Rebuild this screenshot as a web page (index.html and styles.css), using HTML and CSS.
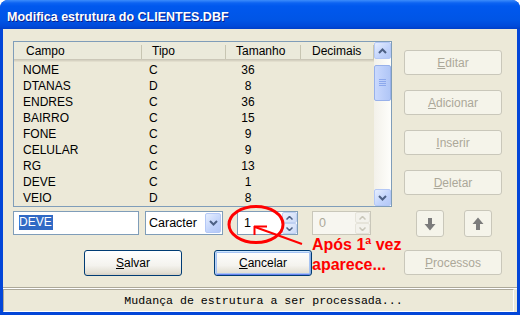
FILE: index.html
```html
<!DOCTYPE html>
<html lang="pt">
<head>
  <meta charset="UTF-8" />
  <title>Modifica estrutura do CLIENTES.DBF</title>
  <link rel="stylesheet" href="styles.css">
</head>
<body>

  <div class="window">
    <div class="titlebar">Modifica estrutura do CLIENTES.DBF</div>

    <div class="client">
      <div class="main">
        <div class="left">
          <div class="grid">
            <div class="cols">
              <div class="head">
                <div class="c-campo">Campo</div>
                <div class="c-tipo">Tipo</div>
                <div class="c-tam">Tamanho</div>
                <div class="c-dec">Decimais</div>
              </div>
              <div id="rows"></div>
            </div>
            <div class="vscroll">
              <div class="sbtn">
                <svg width="9" height="6" viewBox="0 0 9 6"><polyline points="1,5 4.5,1.5 8,5" fill="none" stroke="#4D6185" stroke-width="2"/></svg>
              </div>
              <div class="track">
                <div class="thumb">
                  <svg width="7" height="8" viewBox="0 0 7 8"><path d="M0 0.5h7M0 2.5h7M0 4.5h7M0 6.5h7" stroke="#8CA8EC" stroke-width="1"/></svg>
                </div>
              </div>
              <div class="sbtn">
                <svg width="9" height="6" viewBox="0 0 9 6"><polyline points="1,1 4.5,4.5 8,1" fill="none" stroke="#4D6185" stroke-width="2"/></svg>
              </div>
            </div>
          </div>

          <div class="editrow">
            <div class="textbox"><span class="sel">DEVE</span></div>
            <div class="combo">
              <span class="combo-text">Caracter</span>
              <div class="dropbtn">
                <svg width="9" height="6" viewBox="0 0 9 6"><polyline points="1,1 4.5,4.5 8,1" fill="none" stroke="#4D6185" stroke-width="2"/></svg>
              </div>
            </div>
            <div class="spin">
              <span class="spin-text">1</span>
              <div class="spin-btns">
                <div class="sp"><svg width="7" height="4" viewBox="0 0 7 4"><polyline points="0.5,3.5 3.5,0.5 6.5,3.5" fill="none" stroke="#4D6185" stroke-width="1.5"/></svg></div>
                <div class="sp"><svg width="7" height="4" viewBox="0 0 7 4"><polyline points="0.5,0.5 3.5,3.5 6.5,0.5" fill="none" stroke="#4D6185" stroke-width="1.5"/></svg></div>
              </div>
            </div>
            <div class="spin spin2 disabled">
              <span class="spin-text">0</span>
              <div class="spin-btns">
                <div class="sp"><svg width="7" height="4" viewBox="0 0 7 4"><polyline points="0.5,3.5 3.5,0.5 6.5,3.5" fill="none" stroke="#C9C7BA" stroke-width="1.5"/></svg></div>
                <div class="sp"><svg width="7" height="4" viewBox="0 0 7 4"><polyline points="0.5,0.5 3.5,3.5 6.5,0.5" fill="none" stroke="#C9C7BA" stroke-width="1.5"/></svg></div>
              </div>
            </div>
          </div>

          <div class="actions">
            <button class="btn"><u>S</u>alvar</button>
            <button class="btn default"><u>C</u>ancelar</button>
          </div>
        </div>

        <div class="side">
          <button class="btn off"><u>E</u>ditar</button>
          <button class="btn off"><u>A</u>dicionar</button>
          <button class="btn off"><u>I</u>nserir</button>
          <button class="btn off"><u>D</u>eletar</button>
          <div class="arrows">
            <button class="btn off arrow">
              <svg width="12" height="14" viewBox="0 0 12 14"><path d="M4 1h4v6h3.5l-5.5 6.5-5.5-6.5h3.5z" fill="#7C7C7C"/></svg>
            </button>
            <button class="btn off arrow">
              <svg width="12" height="14" viewBox="0 0 12 14"><path d="M4 13h4v-6h3.5l-5.5-6.5-5.5 6.5h3.5z" fill="#7C7C7C"/></svg>
            </button>
          </div>
          <button class="btn off proc"><u>P</u>rocessos</button>
        </div>
      </div>

      <div class="sep"></div>
      <div class="status">Mudança de estrutura a ser processada...</div>
    </div>

    <!-- anotação em vermelho sobre o print -->
    <svg class="marks" width="520" height="315" viewBox="0 0 520 315">
      <ellipse cx="256" cy="224.5" rx="27" ry="18" fill="none" stroke="#FF0000" stroke-width="3"/>
      <path d="M255 227 L302 244" stroke="#FF0000" stroke-width="2"/>
      <path d="M254 226.5 H267 M254.5 226 V235" stroke="#FF0000" stroke-width="2"/>
    </svg>
    <div class="note">Após 1ª vez<br>aparece...</div>
  </div>

  <script>
    const campos = [
      ["NOME", "C", 36], ["DTANAS", "D", 8], ["ENDRES", "C", 36],
      ["BAIRRO", "C", 15], ["FONE", "C", 9], ["CELULAR", "C", 9],
      ["RG", "C", 13], ["DEVE", "C", 1], ["VEIO", "D", 8]
    ];
    const rows = document.getElementById("rows");
    campos.forEach(c => {
      const div = document.createElement("div");
      div.className = "row";
      div.innerHTML = `
        <div class="c-campo">${c[0]}</div>
        <div class="c-tipo">${c[1]}</div>
        <div class="c-tam">${c[2]}</div>
        <div class="c-dec"></div>
      `;
      rows.appendChild(div);
    });
  </script>

</body>
</html>
```

FILE: styles.css
```css
* {
  margin: 0;
  padding: 0;
  box-sizing: border-box;
}

body {
  background: #ffffff;
  font-family: 'Liberation Sans', Arial, sans-serif;
  font-size: 12px;
  color: #000;
}

.window {
  position: relative;
  width: 520px;
  height: 315px;
  background: #0346D8;
  border-radius: 8px 8px 0 0;
  overflow: hidden;
  display: flex;
  flex-direction: column;
}

.titlebar {
  height: 29px;
  padding: 4px 0 0 7px;
  display: flex;
  align-items: center;
  background: linear-gradient(to bottom, #3C8CFB 0px, #0C63F2 3px, #0058EE 6px, #0055E6 20px, #004ADA 26px, #003FC8 29px);
  color: #fff;
  font-weight: bold;
  font-size: 12.5px;
  text-shadow: 1px 1px #0A1E8C;
}

.client {
  flex: 1;
  margin: 0 3px 3px;
  background: #ECE9D8;
  display: flex;
  flex-direction: column;
}

.main {
  flex: 1;
  display: flex;
  padding: 12px 0 0 10px;
}

.left {
  width: 379px;
}

/* grade */
.grid {
  height: 166px;
  border: 1px solid #7F9DB9;
  display: flex;
}

.cols {
  width: 360px;
}

.head {
  height: 20px;
  display: flex;
  background: #EBEADB;
  box-shadow: inset 0 -1px #E2DECD, inset 0 -2px #D6D2C2, inset 0 -3px #CBC7B8;
}

.head div {
  line-height: 18px;
  background: linear-gradient(#C7C5B2, #C7C5B2) right 3px / 1px 14px no-repeat;
}

.head .c-campo { padding-left: 12px; }
.head .c-tipo { padding-left: 10px; }
.head .c-tam { padding-left: 10px; }
.head .c-dec { padding-left: 11px; }

.c-campo { width: 128px; }
.c-tipo { width: 84px; }
.c-tam { width: 75px; }
.c-dec { width: 73px; }

.row {
  display: flex;
  height: 16px;
  line-height: 16px;
}

.row .c-campo { padding-left: 9px; }
.row .c-tipo { padding-left: 7px; }
.row .c-tam { text-align: center; padding-right: 31px; }

/* barra de rolagem */
.vscroll {
  width: 17px;
  display: flex;
  flex-direction: column;
  background: linear-gradient(to right, #F3F1EA, #FEFEFB);
}

.sbtn {
  height: 17px;
  display: flex;
  align-items: center;
  justify-content: center;
  border: 1px solid #B4C8F6;
  border-radius: 2px;
  background: linear-gradient(135deg, #E6EEFE, #C1D3FB 60%, #B4C8F6);
}

.track {
  flex: 1;
  padding-top: 6px;
}

.thumb {
  height: 36px;
  display: flex;
  align-items: center;
  justify-content: center;
  border: 1px solid #98B1EA;
  border-radius: 2px;
  background: linear-gradient(to right, #CAD9FD, #BACDF9 60%, #B0C6F6);
}

/* linha de edição */
.editrow {
  display: flex;
  margin-top: 4px;
  height: 24px;
}

.textbox {
  width: 126px;
  border: 1px solid #7F9DB9;
  background: #fff;
  padding: 3px 0 0 5px;
}

.sel {
  display: inline-block;
  background: #316AC5;
  color: #fff;
  line-height: 15px;
  padding-right: 1px;
}

.combo {
  width: 78px;
  margin-left: 6px;
  border: 1px solid #7F9DB9;
  background: #fff;
  display: flex;
  align-items: center;
}

.combo-text {
  flex: 1;
  padding-left: 3px;
  font-size: 12.5px;
}

.dropbtn {
  width: 16px;
  height: 20px;
  margin-right: 1px;
  display: flex;
  align-items: center;
  justify-content: center;
  border: 1px solid #B4C8F6;
  border-radius: 2px;
  background: linear-gradient(135deg, #E6EEFE, #C1D3FB 60%, #B4C8F6);
}

.spin {
  width: 61px;
  margin-left: 14px;
  border: 1px solid #7F9DB9;
  background: #fff;
  display: flex;
  align-items: center;
}

.spin-text {
  flex: 1;
  padding-left: 6px;
  font-size: 12.5px;
}

.spin-btns {
  width: 15px;
  height: 22px;
  display: flex;
  flex-direction: column;
}

.sp {
  flex: 1;
  display: flex;
  align-items: center;
  justify-content: center;
  border: 1px solid #BFD0F2;
  border-radius: 2px;
  background: linear-gradient(135deg, #EDF2FD, #CCDAF7);
}

.spin2 {
  width: 59px;
}

.disabled {
  border-color: #C9C7BA;
  background: #F7F6F0;
  color: #ACA899;
}

.disabled .sp {
  border-color: #E6E4DA;
  background: #F3F2EC;
}

/* botões */
.btn {
  width: 98px;
  height: 25px;
  border: 1px solid #003C74;
  border-radius: 3px;
  background: linear-gradient(to bottom, #FFFFFF, #F4F3EE 60%, #E3DFD4 90%, #D6D0C5);
  font-family: 'Liberation Sans', Arial, sans-serif;
  font-size: 12px;
  color: #000;
}

.actions {
  display: flex;
  gap: 32px;
  margin: 15px 0 0 71px;
}

.actions .btn {
  height: 26px;
}

.default {
  box-shadow: inset 0 1px #CEE7FF, inset 1px 0 #BCD4F6, inset -1px 0 #89ADE4, inset 0 -1px #6982EE, inset 0 0 0 2px #A6C3F3;
}

.side {
  display: flex;
  flex-direction: column;
  gap: 15px;
  margin-left: 12px;
  padding-top: 9px;
}

.off {
  border-color: #C9C7BA;
  background: #F5F4EA;
  color: #ACA899;
}

.arrows {
  display: flex;
  gap: 20px;
  padding-left: 12px;
}

.arrow {
  width: 28px;
  height: 27px;
  display: flex;
  align-items: center;
  justify-content: center;
}

.proc {
  margin-top: -2px;
}

/* rodapé */
.sep {
  height: 2px;
  border-top: 1px solid #ACA899;
  border-bottom: 1px solid #fff;
}

.status {
  height: 23px;
  border: 1px solid;
  border-color: #ACA899 #fff #fff #ACA899;
  margin-right: 3px;
  text-align: center;
  padding-left: 10px;
  font-family: 'Liberation Mono', 'Courier New', monospace;
  font-size: 11.6px;
  line-height: 21px;
}

/* anotação */
.marks {
  position: absolute;
  left: 0;
  top: 0;
  pointer-events: none;
}

.note {
  position: absolute;
  left: 312px;
  top: 235px;
  color: #FF0000;
  font-weight: bold;
  font-size: 16px;
  line-height: 20px;
}
```
